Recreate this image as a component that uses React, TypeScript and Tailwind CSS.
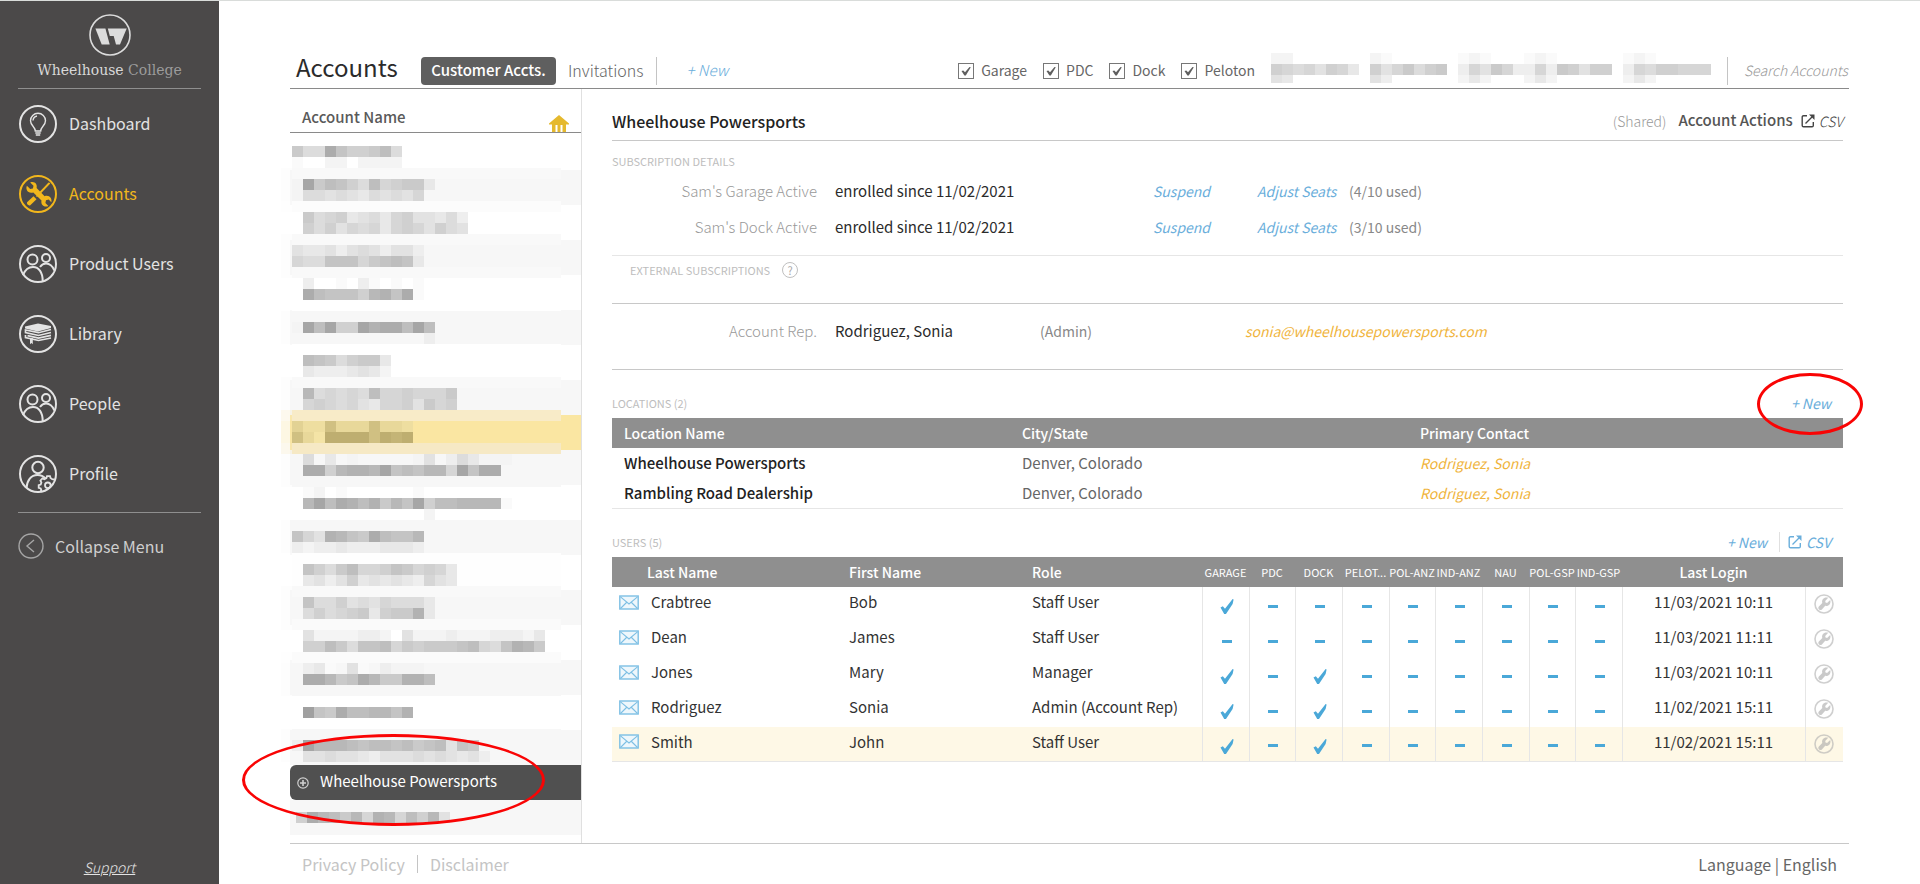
import { useState } from "react";
import type { ReactNode } from "react";
import clsx from "clsx";

/* ---------- data ---------- */

const filters = ["Garage", "PDC", "Dock", "Peloton"];

const subscriptions = [
  { name: "Sam's Garage Active", since: "enrolled since 11/02/2021", used: "(4/10 used)" },
  { name: "Sam's Dock Active", since: "enrolled since 11/02/2021", used: "(3/10 used)" },
];

const locations = [
  { name: "Wheelhouse Powersports", city: "Denver, Colorado", contact: "Rodriguez, Sonia" },
  { name: "Rambling Road Dealership", city: "Denver, Colorado", contact: "Rodriguez, Sonia" },
];

const products = ["GARAGE", "PDC", "DOCK", "PELOT...", "POL-ANZ", "IND-ANZ", "NAU", "POL-GSP", "IND-GSP"];

const users = [
  { last: "Crabtree", first: "Bob", role: "Staff User", has: ["GARAGE"], login: "11/03/2021 10:11" },
  { last: "Dean", first: "James", role: "Staff User", has: [], login: "11/03/2021 11:11" },
  { last: "Jones", first: "Mary", role: "Manager", has: ["GARAGE", "DOCK"], login: "11/03/2021 10:11" },
  { last: "Rodriguez", first: "Sonia", role: "Admin (Account Rep)", has: ["GARAGE", "DOCK"], login: "11/02/2021 15:11" },
  { last: "Smith", first: "John", role: "Staff User", has: ["GARAGE", "DOCK"], login: "11/02/2021 15:11" },
] as { last: string; first: string; role: string; has: string[]; login: string }[];

// w = white, g = striped, y = highlighted, s = selected
const accountRows = "wgwgwgwgygwgwgwgwgsg".split("");

/* ---------- redacted names ---------- */

const CELL = 11;

type MosaicRow = { y: number; x: number; cells: string; warm?: boolean };

// Each hex digit is a grey level, a space leaves the cell empty.
const accountMosaic: MosaicRow[] = [
  { y: 0, x: 11, cells: "7aa268875a" },
  { y: 11, x: 11, cells: "f  ee eeee" },
  { y: 33, x: 11, cells: "e17568a59877c" },
  { y: 44, x: 11, cells: "eaababcabab9" },
  { y: 66, x: 22, cells: "7a98cbac98bbcad" },
  { y: 77, x: 22, cells: "8a8b9a9c989b8ab" },
  { y: 99, x: 11, cells: "bccbdbabdbbd" },
  { y: 110, x: 11, cells: "9aa66697656c" },
  { y: 132, x: 22, cells: "d  f df f f" },
  { y: 143, x: 22, cells: "2566684362f" },
  { y: 176, x: 11, cells: "e151881322515" },
  { y: 187, x: 143, cells: "d" },
  { y: 209, x: 22, cells: "567a877c" },
  { y: 220, x: 22, cells: "cdddcbce" },
  { y: 242, x: 22, cells: "4a9a9a59989997" },
  { y: 253, x: 22, cells: "989a9bc998b798" },
  { y: 275, x: 11, cells: "8aa5999599a", warm: true },
  { y: 286, x: 11, cells: "59b22225232", warm: true },
  { y: 308, x: 22, cells: "a c e     eb daceee" },
  { y: 319, x: 22, cells: "228433416564491622" },
  { y: 341, x: 22, cells: "fe f      f" },
  { y: 352, x: 22, cells: "415235374618554444f" },
  { y: 363, x: 143, cells: "e" },
  { y: 385, x: 11, cells: "69b346725664" },
  { y: 396, x: 11, cells: "deddcdddcccd" },
  { y: 418, x: 22, cells: "68a7599867989c" },
  { y: 429, x: 22, cells: "cbdb8cbcbcd9bc" },
  { y: 451, x: 22, cells: "6aa8bab9aaac" },
  { y: 462, x: 22, cells: "a8a987c8773c" },
  { y: 484, x: 22, cells: "beeeedde beeedeeedddec" },
  { y: 495, x: 22, cells: "8857a665978777659a6347" },
  { y: 517, x: 22, cells: "dcf bf deee" },
  { y: 528, x: 22, cells: "224762477335" },
  { y: 561, x: 22, cells: "0672554463" },
  { y: 594, x: 11, cells: "d1444565565765b67" },
  { y: 605, x: 22, cells: "bbabbcdbbbababcbd" },
  { y: 666, x: 15, cells: "8245749349584b" },
];

const filterMosaic: MosaicRow[] = [
  { y: 0, x: 0, cells: "ee       ef      fef   fef      fef" },
  { y: 11, x: 0, cells: "89a9b89c 8b97a87 d9b79dd9d78b88 d9a88999" },
  { y: 22, x: 0, cells: "bc       bd      ece   ece      ece" },
];

const bands = [
  [22, 11, "#f9f9f9"],
  [33, 22, "#f7f7f7"],
  [55, 11, "#fcfcfc"],
  [66, 22, "#ffffff"],
  [88, 11, "#f9f9f9"],
  [99, 22, "#f7f7f7"],
  [121, 11, "#f9f9f9"],
  [132, 33, "#ffffff"],
  [165, 33, "#f7f7f7"],
  [198, 33, "#ffffff"],
  [231, 11, "#f9f9f9"],
  [242, 22, "#f7f7f7"],
  [264, 11, "#f8ebc8"],
  [275, 22, "#fae6a2"],
  [297, 11, "#f6e9c5"],
  [308, 33, "#f7f7f7"],
  [341, 33, "#ffffff"],
  [374, 33, "#f7f7f7"],
  [407, 33, "#fefefe"],
  [440, 11, "#f9f9f9"],
  [451, 22, "#f7f7f7"],
  [473, 11, "#fafafa"],
  [484, 22, "#ffffff"],
  [506, 11, "#fbfbfb"],
  [517, 33, "#f7f7f7"],
  [550, 33, "#ffffff"],
  [583, 33, "#f7f7f7"],
] as [number, number, string][];

function shade(level: string, warm?: boolean) {
  const v = 160 + parseInt(level, 16) * 6;
  return warm ? `rgb(${v + 18},${v + 2},${v - 60})` : `rgb(${v},${v},${v})`;
}

function Cells({ rows }: { rows: MosaicRow[] }) {
  return (
    <>
      {rows.map((row) =>
        row.cells.split("").map((c, i) =>
          c === " " ? null : (
            <rect
              key={`${row.y}-${i}`}
              x={row.x + i * CELL}
              y={row.y}
              width={CELL}
              height={CELL}
              fill={shade(c, row.warm)}
            />
          ),
        ),
      )}
    </>
  );
}

/* ---------- icons ---------- */

function NavIcon({ children }: { children: ReactNode }) {
  return (
    <svg viewBox="0 0 40 40" className="h-10 w-10" fill="none" stroke="currentColor" strokeWidth="2" aria-hidden="true">
      <circle cx="20" cy="20" r="18" />
      {children}
    </svg>
  );
}

function BulbIcon() {
  return (
    <NavIcon>
      <g strokeWidth="1.4">
        <path d="M17.3 27c0-4-4.8-5.600-4.800-10.200a7.500 7.500 0 0 1 15 0c0 4.600-4.800 6.200-4.800 10.200z" />
        <path d="M15 16.500a5 5 0 0 1 4-4.500M17.300 29h5.400M17.800 31h4.400" />
      </g>
    </NavIcon>
  );
}

function ToolsIcon() {
  return (
    <NavIcon>
      <g fill="currentColor" stroke="none">
        <path d="M12.200 8.500l3.300 3.300-.6 2.700-2.700.6-3.300-3.300c-1.500 3.200.6 7 4.200 7 .9 0 1.600-.2 2.200-.4l8.200 8.200c-.8 3.400 1.400 6 4.400 6 .9 0 1.700-.2 2.500-.6l-3-3 .6-2.700 2.700-.7 2.600 2.700c1-3.200-1.200-6.500-4.500-6.500-.8 0-1.500.1-2.200.4l-8-8.200c1-3.700-2-7.200-6.400-5.500z" />
        <path d="M31.500 8.800l.8.800-9.300 9.600-1.500-1.300 9-9.500z" />
        <path d="M15.500 22.200l3 3-6.200 6c-1.600 1.200-4.300-1.500-3-3.100z" />
        <path d="M18 22l3-3 1 1-3 3z" />
      </g>
    </NavIcon>
  );
}

function PeopleIcon() {
  return (
    <NavIcon>
      <circle cx="14.500" cy="15.500" r="5" />
      <circle cx="28" cy="14" r="4" />
      <path d="M5 31c2-5 5.500-8 10-8 6 0 9.700 5.500 9.700 14M22 23c1.500-2.200 3.500-3.500 6-3.500 4 0 6.500 2.500 8.300 7" />
    </NavIcon>
  );
}

function LibraryIcon() {
  return (
    <NavIcon>
      <path fill="currentColor" stroke="none" d="M7 12.500l13-3 13 2.500v2l-13 3.500-13-3z" />
      <path
        strokeWidth="1.700"
        d="M33 15.500l-12.500 3.200L7.500 16v2.500l13 3L33 18.500M7.500 21v2.500l13 3L33 24M33 21.300l-12.500 2.900-11-2.500"
      />
      <path fill="currentColor" stroke="none" d="M12 24h2.800v6.200l-1.400-1.300-1.400 1.300z" />
    </NavIcon>
  );
}

function ProfileIcon() {
  return (
    <NavIcon>
      <circle cx="20" cy="13.500" r="5.700" />
      <path d="M8.500 34c.5-7.500 4.500-13 11-13 3.500 0 6 1.200 8 3.500" />
      <path
        strokeWidth="1.800"
        d="M36.500 25.500l-2.300-.3-1.700-1.200-.5-1.800h-3l-.6 2-2 1-2-.8-2 2.200 1 2-.7 2-2 .6v2.600l2 .7.600 1.600-.7 1.400"
      />
      <circle cx="29.800" cy="31.300" r="2.800" strokeWidth="1.800" />
    </NavIcon>
  );
}

function Logo() {
  return (
    <svg viewBox="0 0 42 42" className="h-[42px] w-[42px] text-[#dcdcdc]" aria-hidden="true">
      <circle cx="21" cy="21" r="20" fill="none" stroke="currentColor" strokeWidth="1.600" />
      <g fill="currentColor">
        <path d="M6.400 14.600h10l4.300 16h-8z" />
        <path d="M18.800 14.600h18.900L31 30.600h-4l-2.300-8.600h-3.900z" />
      </g>
    </svg>
  );
}

function ExportIcon() {
  return (
    <svg viewBox="0 0 14 14" className="h-3.5 w-3.5" fill="none" stroke="currentColor" strokeWidth="1.400" aria-hidden="true">
      <path d="M6 1.700H2.500A1.300 1.300 0 0 0 1.200 3v8.500a1.300 1.300 0 0 0 1.300 1.300H11a1.300 1.300 0 0 0 1.300-1.300V8M4.500 9.500L11 3" />
      <path d="M8 .5h5.500V6z" fill="currentColor" stroke="none" />
    </svg>
  );
}

function EnvelopeIcon() {
  return (
    <svg viewBox="0 0 20 15" className="h-[15px] w-5" fill="none" aria-hidden="true">
      <rect x=".8" y="1" width="18.400" height="13" fill="#eef7fc" stroke="#7dbfe4" strokeWidth="1.400" />
      <path d="M1.500 1.800L10 9l8.500-7.200M1.500 13.500l6-6M18.500 13.500l-6-6" stroke="#7dbfe4" strokeWidth="1.100" />
    </svg>
  );
}

function CheckMark() {
  return (
    <svg viewBox="0 0 16 18" className="h-[18px] w-4" role="img" aria-label="Enrolled">
      <path d="M1.500 10.500l2.300-1.200 2.200 2.500L13.600 2l1 .5-1 4.500-6.600 10h-1.800z" fill="#4aa8d8" />
    </svg>
  );
}

function WrenchIcon() {
  return (
    <svg viewBox="0 0 20 20" className="h-5 w-5 opacity-60" aria-hidden="true">
      <circle cx="10" cy="10" r="9" fill="none" stroke="#b0b0b0" strokeWidth="1.600" />
      <path
        d="M14.200 3.800l-3 3.200.3 1.600 1.600.3 3.100-3c1.200 3.600-1.600 6.600-5 5.900l-3.300 3.600c-2 1.600-4.800-1-3-3l3.400-3.500c-1-3.600 2.200-6.400 5.900-5.100z"
        fill="#a8a8a8"
      />
    </svg>
  );
}

/* ---------- pieces ---------- */

const navItems = [
  { label: "Dashboard", icon: <BulbIcon /> },
  { label: "Accounts", icon: <ToolsIcon />, active: true },
  { label: "Product Users", icon: <PeopleIcon /> },
  { label: "Library", icon: <LibraryIcon /> },
  { label: "People", icon: <PeopleIcon /> },
  { label: "Profile", icon: <ProfileIcon /> },
];

function Sidebar() {
  return (
    <aside className="flex w-[219px] shrink-0 flex-col bg-[#4b4949] px-[18px] text-base text-[#e3e3e3]">
      <div className="flex flex-col items-center border-b border-[#8f8f8f] pt-[13px] pb-1">
        <Logo />
        <p className="font-['DejaVu_Serif'] text-sm leading-7 text-[#d8d8d8]">
          Wheelhouse <span className="text-[#9c9c9c]">College</span>
        </p>
      </div>
      <nav className="flex flex-col gap-[30px] border-b border-[#8f8f8f] pt-[15px] pb-[18px]">
        {navItems.map((item) => (
          <a
            key={item.label}
            href="#"
            className={clsx("flex h-10 items-center gap-[11px]", item.active && "text-[#f2b71c]")}
          >
            {item.icon}
            <span className="pb-0.5">{item.label}</span>
          </a>
        ))}
      </nav>
      <button type="button" className="mt-5 flex items-center gap-[11px] text-[#cfcfcf]">
        <svg viewBox="0 0 26 26" className="h-[26px] w-[26px]" fill="none" stroke="#a5a5a5" strokeWidth="1.400" aria-hidden="true">
          <circle cx="13" cy="13" r="12" />
          <path d="M16 7l-7 6 7 6" />
        </svg>
        Collapse Menu
      </button>
      <a href="#" className="mt-auto pb-[7px] text-center text-sm font-light italic underline">
        Support
      </a>
    </aside>
  );
}

function Header() {
  const [checked, setChecked] = useState(filters);

  const toggle = (name: string) =>
    setChecked((prev) => (prev.includes(name) ? prev.filter((f) => f !== name) : [...prev, name]));

  return (
    <header className="mt-14 flex h-8 items-start border-b border-[#8a8a8a] text-base">
      <h1 className="w-[131px] pl-1.5 text-2xl leading-5 text-[#2b2b2b]">Accounts</h1>
      <button type="button" className="h-7 w-[135px] rounded bg-[#5f5f5f] pb-0.5 text-[15px] font-medium text-white">
        Customer Accts.
      </button>
      <button type="button" className="h-7 border-r border-[#c4c4c4] pr-3 pb-0.5 pl-3 font-light text-[#666]">
        Invitations
      </button>
      <button type="button" className="h-7 pb-0.5 pl-[30px] text-[15px] font-light italic text-[#6aaedb]">
        + New
      </button>

      <div className="ml-auto flex h-7 items-center gap-4 text-sm text-[#666]">
        {filters.map((name) => (
          <label key={name} className="flex items-center gap-[7px]">
            <span className="relative h-4 w-4">
              <input
                type="checkbox"
                checked={checked.includes(name)}
                onChange={() => toggle(name)}
                className="peer block h-4 w-4 appearance-none border border-[#777] bg-white"
              />
              <svg viewBox="0 0 16 16" className="pointer-events-none absolute inset-0 hidden peer-checked:block" aria-hidden="true">
                <path d="M3.500 8l1.800-.6 1.700 1.800L11.500 4l1.300.2-5 8.300h-1.400z" fill="#5f5f5f" />
              </svg>
            </span>
            <span className="pb-0.5">{name}</span>
          </label>
        ))}
        <svg width="440" height="30" viewBox="0 0 440 30" shapeRendering="crispEdges" className="-mt-1.5" aria-hidden="true">
          <Cells rows={filterMosaic} />
        </svg>
        <div className="h-7 border-l border-[#c4c4c4] pl-4">
          <input
            type="text"
            aria-label="Search accounts"
            placeholder="Search Accounts"
            className="h-7 w-[105px] pb-0.5 font-light italic outline-none placeholder:text-[#999]"
          />
        </div>
      </div>
    </header>
  );
}

function AccountList() {
  return (
    <section className="relative w-[292px] shrink-0 border-r border-[#e0e0e0] pb-2">
      <div className="flex h-11 items-end justify-between border-b border-[#8a8a8a] pr-3 pl-3">
        <h2 className="text-[15px] font-medium leading-[30px] text-[#5a5a5a]">Account Name</h2>
        <svg viewBox="0 0 20 17" className="h-[17px] w-5" fill="#e5b92e" aria-hidden="true">
          <path d="M10 0l10 8.500v1h-3V17h-3.500v-7h-2v7h-3v-7h-2v7H3V9.500H0v-1z" />
        </svg>
      </div>
      <ul className="pt-0.5">
        {accountRows.map((kind, i) => (
          <li
            key={i}
            className={clsx(
              "h-[35px]",
              kind === "g" && "bg-[#f7f7f7]",
              kind === "y" && "bg-[#fae6a2]",
              kind === "s" && "relative z-10 rounded-l-md bg-[#505050]",
            )}
          >
            {kind === "s" && (
              <>
                <button type="button" className="flex h-full w-full items-center gap-[11px] pl-[7px] text-[15px] text-white">
                  <svg viewBox="0 0 12 12" className="h-3 w-3" fill="none" stroke="#d0d0d0" strokeWidth="1.200" aria-hidden="true">
                    <circle cx="6" cy="6" r="5.200" />
                    <path d="M6 3v6M3 6h6" strokeWidth="1.600" />
                  </svg>
                  <span className="pb-0.5">Wheelhouse Powersports</span>
                </button>
                <span className="pointer-events-none absolute -top-[31px] -left-12 h-[92px] w-[303px] rounded-[50%] border-[3px] border-[#f90404]" />
              </>
            )}
          </li>
        ))}
      </ul>
      <svg
        width="280"
        height="690"
        viewBox="0 0 280 690"
        shapeRendering="crispEdges"
        className="pointer-events-none absolute top-[57px] -left-[9px]"
        aria-hidden="true"
      >
        {bands.map(([y, h, fill]) => (
          <g key={y} fill={fill}>
            <rect x="11" y={y} width="269" height={h} />
            <rect x="0" y={y} width="11" height={h} opacity=".3" />
          </g>
        ))}
        <Cells rows={accountMosaic} />
      </svg>
    </section>
  );
}

function SectionLabel({ children }: { children: ReactNode }) {
  return <h3 className="text-[11px] leading-[18px] text-[#bdbdbd]">{children}</h3>;
}

function BlueLink({ children }: { children: ReactNode }) {
  return (
    <button type="button" className="text-left text-sm italic text-[#6aaedb]">
      {children}
    </button>
  );
}

function LocationsTable() {
  return (
    <table className="w-full table-fixed border-b border-[#e6e6e6] text-left text-sm">
      <colgroup>
        <col className="w-[398px]" />
        <col className="w-[398px]" />
        <col />
      </colgroup>
      <thead className="bg-[#8f8f8f] text-white">
        <tr className="h-[30px]">
          <th className="px-3 py-0 font-medium">Location Name</th>
          <th className="px-3 py-0 font-medium">City/State</th>
          <th className="px-3 py-0 font-medium">Primary Contact</th>
        </tr>
      </thead>
      <tbody>
        {locations.map((loc) => (
          <tr key={loc.name} className="h-[30px]">
            <td className="px-3 py-0 text-[15px] font-medium text-[#222]">{loc.name}</td>
            <td className="px-3 py-0 text-[15px] text-[#666]">{loc.city}</td>
            <td className="px-3 py-0">
              <a href="#" className="italic text-[#f0b43c]">{loc.contact}</a>
            </td>
          </tr>
        ))}
      </tbody>
    </table>
  );
}

function UsersTable() {
  return (
    <table className="w-full table-fixed border-b border-[#e6e6e6] text-left text-[#333]">
      <colgroup>
        <col className="w-[35px]" />
        <col />
        <col className="w-[183px]" />
        <col className="w-[170px]" />
        {products.map((p, i) => (
          <col key={p} className={i % 3 === 1 ? "w-[46px]" : "w-[47px]"} />
        ))}
        <col className="w-[183px]" />
        <col className="w-[38px]" />
      </colgroup>
      <thead className="bg-[#8f8f8f] text-sm leading-[30px] text-white">
        <tr>
          <th className="p-0" aria-label="Email" />
          <th className="p-0 font-medium">Last Name</th>
          <th className="p-0 font-medium">First Name</th>
          <th className="p-0 font-medium">Role</th>
          {products.map((p) => (
            <th key={p} className="p-0 text-center text-[11px] font-normal whitespace-nowrap">
              {p}
            </th>
          ))}
          <th className="p-0 text-center font-medium">Last Login</th>
          <th className="p-0" aria-label="Actions" />
        </tr>
      </thead>
      <tbody className="text-[15px] leading-5">
        {users.map((u) => (
          <tr key={u.last} className="h-[35px] last:bg-[#fef8e6]">
            <td className="p-0 pb-1 pl-[7px]">
              <button type="button" aria-label={`Email ${u.first} ${u.last}`} className="block">
                <EnvelopeIcon />
              </button>
            </td>
            <td className="p-0 pb-1 pl-1">{u.last}</td>
            <td className="p-0 pb-1">{u.first}</td>
            <td className="p-0 pb-1">{u.role}</td>
            {products.map((p) => (
              <td key={p} className="border-l border-[#e6e6e6] p-0">
                <div className="flex justify-center pt-1 pl-0.5">
                  {u.has.includes(p) ? <CheckMark /> : <span className="h-[3px] w-2.5 bg-[#4aa8d8]" />}
                </div>
              </td>
            ))}
            <td className="border-l border-[#e6e6e6] p-0 pb-1 text-center">{u.login}</td>
            <td className="border-l border-[#e6e6e6] p-0">
              <button type="button" aria-label={`Edit ${u.first} ${u.last}`} className="mx-auto block">
                <WrenchIcon />
              </button>
            </td>
          </tr>
        ))}
      </tbody>
    </table>
  );
}

function AccountDetail() {
  return (
    <section className="min-w-0 flex-1 pr-1.5 pl-[30px]">
      <div className="flex h-[52px] items-center border-b border-[#c8c8c8] pt-3">
        <h2 className="text-base font-medium text-[#222]">Wheelhouse Powersports</h2>
        <span className="ml-auto text-sm font-light text-[#999]">(Shared)</span>
        <button type="button" className="ml-3 font-medium text-[#555]">Account Actions</button>
        <button type="button" className="ml-2 flex items-center gap-1 text-sm font-light italic text-[#444]">
          <ExportIcon />
          CSV
        </button>
      </div>

      <div className="border-b border-[#e6e6e6] pt-[11px] pb-2.5">
        <SectionLabel>SUBSCRIPTION DETAILS</SectionLabel>
        <div className="mt-[3px]">
          {subscriptions.map((sub) => (
            <div key={sub.name} className="flex h-9 items-center">
              <span className="w-[205px] text-right font-light text-[#999]">{sub.name}</span>
              <span className="ml-[18px] w-[318px] text-[#2b2b2b]">{sub.since}</span>
              <span className="w-[104px]"><BlueLink>Suspend</BlueLink></span>
              <span className="w-[92px]"><BlueLink>Adjust Seats</BlueLink></span>
              <span className="text-sm text-[#888]">{sub.used}</span>
            </div>
          ))}
        </div>
      </div>

      <div className="flex h-12 items-start gap-3 border-b border-[#c8c8c8] pt-[5px] pl-[18px]">
        <SectionLabel>EXTERNAL SUBSCRIPTIONS</SectionLabel>
        <button
          type="button"
          aria-label="Help"
          className="mt-px h-4 w-4 rounded-full border border-[#c0c0c0] text-[11px] leading-[14px] text-[#aaa]"
        >
          ?
        </button>
      </div>

      <div className="flex h-[66px] border-b border-[#c8c8c8] pt-[15px] leading-6">
        <span className="w-[205px] text-right font-light text-[#999]">Account Rep.</span>
        <span className="ml-[18px] w-[205px] text-[#2b2b2b]">Rodriguez, Sonia</span>
        <span className="w-[205px] text-sm leading-6 text-[#888]">(Admin)</span>
        <a href="mailto:sonia@wheelhousepowersports.com" className="text-sm leading-6 italic text-[#f0b43c]">
          sonia@wheelhousepowersports.com
        </a>
      </div>

      <div className="flex h-12 items-end justify-between pr-3 leading-[30px]">
        <div className="pb-1.5"><SectionLabel>LOCATIONS (2)</SectionLabel></div>
        <div className="relative">
          <BlueLink>+ New</BlueLink>
          <span className="pointer-events-none absolute -top-[15px] -left-[34px] h-[62px] w-[106px] rounded-[50%] border-[3px] border-[#f90404]" />
        </div>
      </div>
      <LocationsTable />

      <div className="flex h-12 items-end justify-between pr-3 leading-[30px]">
        <div className="pb-1.5"><SectionLabel>USERS (5)</SectionLabel></div>
        <div className="flex h-[30px] items-center">
          <BlueLink>+ New</BlueLink>
          <span className="mr-2 ml-3 h-5 w-px bg-[#e0e0e0]" />
          <BlueLink>
            <span className="flex items-center gap-1">
              <ExportIcon />
              CSV
            </span>
          </BlueLink>
        </div>
      </div>
      <UsersTable />
    </section>
  );
}

export default function App() {
  return (
    <div className="flex min-h-screen border-t border-[#d9dcda] bg-white font-['Noto_Sans_CJK_SC',sans-serif]">
      <Sidebar />
      <div className="flex min-w-0 flex-1 flex-col px-[71px]">
        <Header />
        <main className="flex flex-1 text-[15px]">
          <AccountList />
          <AccountDetail />
        </main>
        <footer className="flex h-[41px] items-center border-t border-[#c8c8c8] px-3 text-base text-[#c4c4c4]">
          <a href="#">Privacy Policy</a>
          <span className="mx-3 h-[18px] w-px bg-[#c4c4c4]" />
          <a href="#">Disclaimer</a>
          <button type="button" className="ml-auto text-[#666]">
            Language | English
          </button>
        </footer>
      </div>
    </div>
  );
}
